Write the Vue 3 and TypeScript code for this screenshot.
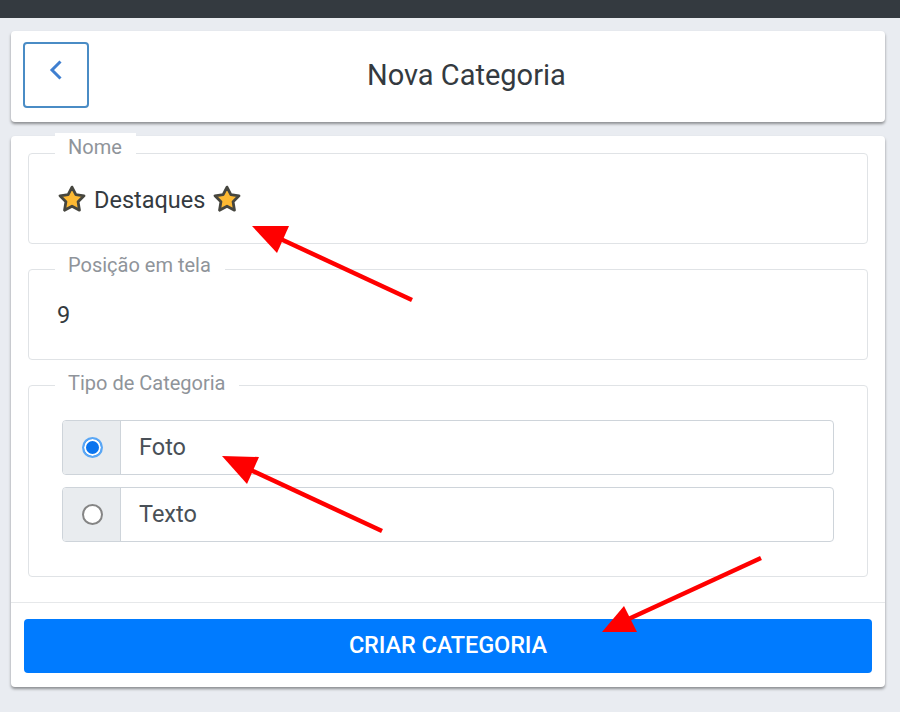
<template>
  <div class="page">
    <div class="topbar"></div>

    <header class="card head">
      <button class="back" type="button" aria-label="Voltar">
        <svg width="18" height="24" viewBox="0 0 18 24">
          <path d="M13.5 3.5 L5 12 L13.5 20.5" fill="none" stroke="#3f7fd0" stroke-width="3" />
        </svg>
      </button>
      <h1>Nova Categoria</h1>
    </header>

    <main class="card form">
      <div class="fields">
        <div class="field">
          <span class="legend first">Nome</span>
          <div class="value name">
            <svg class="star" viewBox="0 0 24 24"><path :d="starPath" /></svg>
            <span>Destaques</span>
            <svg class="star" viewBox="0 0 24 24"><path :d="starPath" /></svg>
          </div>
        </div>

        <div class="field">
          <span class="legend second">Posição em tela</span>
          <div class="value number">9</div>
        </div>

        <div class="field types">
          <span class="legend third">Tipo de Categoria</span>
          <label v-for="opt in options" :key="opt" class="option">
            <span class="addon">
              <span class="radio" :class="{ on: opt === selected }"></span>
            </span>
            <span class="text">{{ opt }}</span>
          </label>
        </div>
      </div>

      <div class="footer">
        <button class="submit" type="button">CRIAR CATEGORIA</button>
      </div>
    </main>

    <!-- setas vermelhas da captura -->
    <svg class="arrows" width="900" height="712" viewBox="0 0 900 712">
      <g v-for="a in arrows" :key="a.head">
        <line :x1="a.x1" :y1="a.y1" :x2="a.x2" :y2="a.y2" stroke="#f00" stroke-width="4.5" />
        <polygon :points="a.head" fill="#f00" />
      </g>
    </svg>
  </div>
</template>

<script setup lang="ts">
const options: string[] = ["Foto", "Texto"];
const selected = "Foto";

const starPath =
  "M12 1.8 L15.3 8.2 L22.3 9.3 L17.2 14.3 L18.4 21.6 L12 18.2 L5.6 21.6 L6.8 14.3 L1.7 9.3 L8.7 8.2 Z";

const arrows = [
  { x1: 412, y1: 300, x2: 272, y2: 235, head: "252,226 289,226 277,253" },
  { x1: 382, y1: 531, x2: 242, y2: 466, head: "222,456 259,457 247,484" },
  { x1: 761, y1: 558, x2: 622, y2: 622, head: "602,632 624,606 637,632" },
];
</script>

<style>
html,
body {
  margin: 0;
  background: #e9ecf1;
}
</style>

<style scoped>
.page {
  position: relative;
  width: 900px;
  height: 712px;
  overflow: hidden;
  background: #e9ecf1;
  font-family: Roboto, "Liberation Sans", sans-serif;
  color: #343a40;
}

.topbar {
  height: 18px;
  background: #343a40;
}

.card {
  margin: 0 15px 0 11px;
  background: #fff;
  border-radius: 4px;
  box-shadow: 0 2px 3px rgba(0, 0, 0, 0.4);
}

.head {
  display: flex;
  align-items: center;
  height: 91px;
  margin-top: 13px;
  padding: 0 12px 3px;
  box-sizing: border-box;
}

.back {
  display: flex;
  justify-content: center;
  padding: 0 0 10px;
  align-items: center;
  flex: none;
  width: 66px;
  height: 66px;
  background: #fff;
  border: 2px solid #4a8cc5;
  border-radius: 4px;
}

h1 {
  margin: 0;
  padding-left: 278px;
  font-size: 29px;
  font-weight: 400;
  line-height: 1.2;
  color: #343a40;
}

.form {
  margin-top: 14px;
  height: 551px;
  display: flex;
  flex-direction: column;
}

.fields {
  display: flex;
  flex-direction: column;
  gap: 25px;
  height: 466px;
  padding: 17px 17px 0;
  box-sizing: border-box;
}

.field {
  position: relative;
  height: 91px;
  box-sizing: border-box;
  border: 1px solid #e0e3e6;
  border-radius: 4px;
}

.legend {
  position: absolute;
  left: 26px;
  padding: 0 14px 0 13px;
  background: #fff;
  font-size: 20px;
  line-height: 20px;
  color: #8f949a;
}

.legend.first {
  top: -21px;
  height: 27px;
  padding-top: 4px;
  box-sizing: border-box;
}

.legend.second {
  top: -15px;
}

.legend.third {
  top: -13px;
}

.value {
  font-size: 23.5px;
  line-height: 24px;
}

.name {
  display: flex;
  align-items: center;
  gap: 8px;
  padding: 33px 0 0 29px;
}

.star {
  width: 28px;
  height: 28px;
  margin-top: -2px;
  fill: #fdb933;
  stroke: #46463f;
  stroke-width: 2.4;
  stroke-linejoin: round;
}

.number {
  padding: 33px 0 0 28px;
}

.types {
  display: flex;
  flex-direction: column;
  gap: 12px;
  height: 192px;
  padding: 34px 33px 0;
}

.option {
  display: flex;
  height: 55px;
  box-sizing: border-box;
  border: 1px solid #ced4da;
  border-radius: 4px;
  overflow: hidden;
}

.addon {
  display: flex;
  align-items: center;
  justify-content: center;
  flex: none;
  width: 58px;
  padding: 0 0 1px 1px;
  background: #e9ecef;
  border-right: 1px solid #ced4da;
  box-sizing: border-box;
}

.radio {
  width: 21px;
  height: 21px;
  box-sizing: border-box;
  border: 2px solid #858585;
  border-radius: 50%;
  background: #fff;
}

.radio.on {
  border-color: #5aa7f5;
  background: #0a74ee;
  box-shadow: inset 0 0 0 2px #fff;
}

.text {
  display: flex;
  align-items: center;
  padding: 0 0 2px 18px;
  font-size: 23.5px;
  color: #495057;
}

.footer {
  flex: 1;
  padding: 16px 13px 0;
  border-top: 1px solid #e6e8ea;
}

.submit {
  display: block;
  width: 100%;
  height: 54px;
  padding: 0 0 2px;
  border: none;
  border-radius: 4px;
  background: #007bff;
  color: #fff;
  font-family: inherit;
  font-size: 23.5px;
  font-weight: 500;
  letter-spacing: -0.1px;
}

.arrows {
  position: absolute;
  top: 0;
  left: 0;
  pointer-events: none;
}
</style>
